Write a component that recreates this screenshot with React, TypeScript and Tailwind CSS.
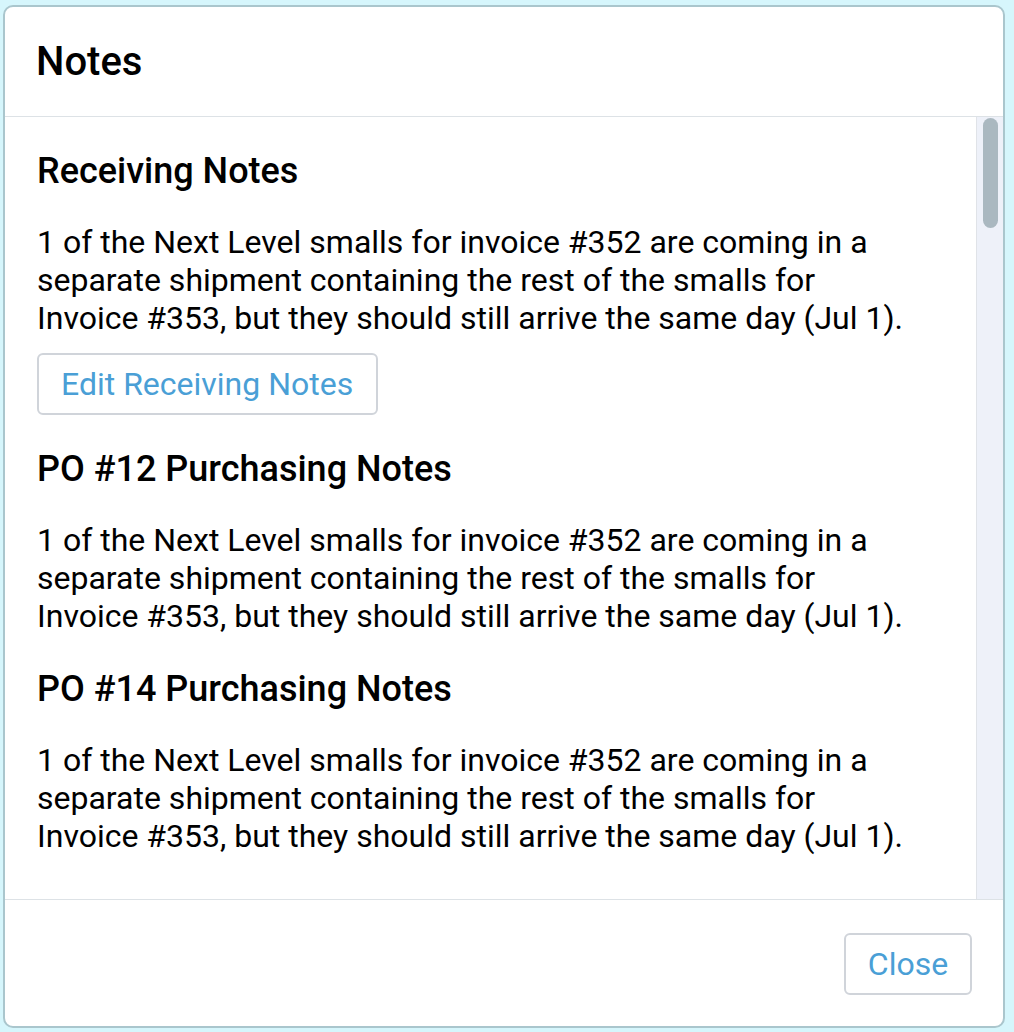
const note =
  '1 of the Next Level smalls for invoice #352 are coming in a separate shipment containing the rest of the smalls for Invoice #353, but they should still arrive the same day (Jul 1).';

function Section({ title, children }: { title: string; children?: React.ReactNode }) {
  return (
    <section className="flex flex-col items-start">
      <h3 className="text-[36px] leading-[38px] font-medium text-black">{title}</h3>
      <p className="mt-[33px] text-[32px] leading-[38px] text-black">{note}</p>
      {children}
    </section>
  );
}

export default function App() {
  return (
    <div className="w-[1014px] h-[1032px] bg-[#d6f6fc] p-[3px] pt-[5px] pb-[4px] font-['Roboto',sans-serif]">
      <div className="h-full w-[1002px] bg-white border-2 border-[#aac6cd] rounded-[10px] flex flex-col overflow-hidden">
        {/* Header */}
        <div className="h-[110px] shrink-0 flex items-center px-[31px] border-b border-[#dde2e6]">
          <h2 className="text-[40px] font-medium text-black">Notes</h2>
        </div>

        {/* Body + fake scrollbar */}
        <div className="flex h-[783px] shrink-0 border-b border-[#dde2e6]">
          <div className="flex-1 overflow-hidden pl-[32px] pr-[56px] pt-[35px] flex flex-col gap-[35px]">
            <Section title="Receiving Notes">
              <button className="mt-[16px] h-[62px] pl-[22px] pr-[23px] rounded-[6px] border-2 border-[#d0d4da] text-[32px] text-[#4a9fd6] bg-white">
                Edit Receiving Notes
              </button>
            </Section>
            <Section title="PO #12 Purchasing Notes" />
            <Section title="PO #14 Purchasing Notes" />
          </div>
          <div className="w-[27px] shrink-0 bg-[#eef1f9] border-l border-[#e0e3e8] pl-[6px] pt-[1px]">
            <div className="w-[15px] h-[110px] rounded-full bg-[#aab8c0]" />
          </div>
        </div>

        {/* Footer */}
        <div className="flex-1 flex items-start justify-end pt-[33px] pr-[31px]">
          <button className="h-[62px] w-[128px] rounded-[6px] border-2 border-[#d0d4da] text-[32px] text-[#4a9fd6] bg-white">
            Close
          </button>
        </div>
      </div>
    </div>
  );
}
